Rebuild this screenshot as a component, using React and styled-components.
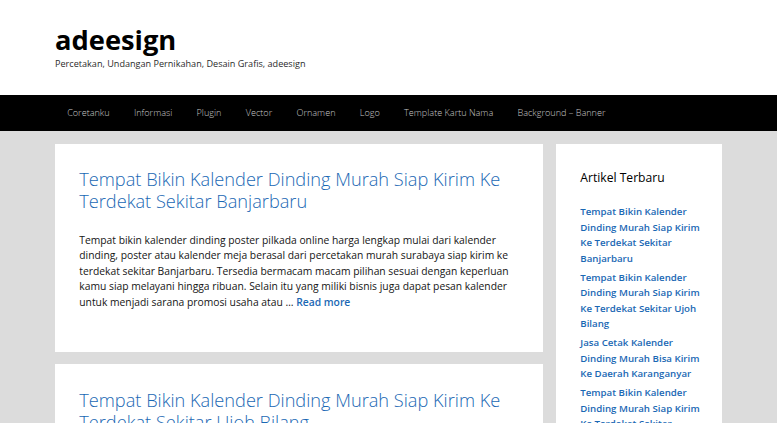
import React from "react";
import styled, { createGlobalStyle } from "styled-components";

const s = (v) => `${(v * 0.607).toFixed(2)}px`;

const Global = createGlobalStyle`
  html, body { margin: 0; padding: 0; }
  body { background: #dcdcdc; font-family: "Open Sans", "Noto Sans", sans-serif; color: #3a3a3a; }
  a { text-decoration: none; }
`;

const Header = styled.header`
  background: #fff;
  height: 95px;
  box-sizing: border-box;
  padding: ${s(40)} 0 0 55px;
`;

const SiteTitle = styled.div`
  font-size: ${s(45)};
  font-weight: 700;
  color: #000;
  line-height: 1.2;
`;

const Tagline = styled.div`
  font-size: ${s(15)};
  color: #2a2a2a;
  line-height: 1.5;
`;

const Nav = styled.nav`
  background: #000;
  height: 36px;
  display: flex;
  align-items: center;
  padding-left: 55px;
`;

const NavItem = styled.a`
  color: #c8c8c8;
  font-size: ${s(15)};
  font-weight: 300;
  padding: 0 ${s(20)};
  line-height: 36px;
`;

const Container = styled.div`
  display: flex;
  gap: 13px;
  padding: 13px 55px 0 55px;
  align-items: flex-start;
`;

const Main = styled.main`
  width: 488px;
  display: flex;
  flex-direction: column;
  gap: 12px;
`;

const Card = styled.article`
  background: #fff;
  padding: ${s(40)} ${s(40)} ${s(44)};
`;

const PostTitle = styled.h2`
  margin: 1px 0 0;
  font-size: ${s(30)};
  font-weight: 300;
  line-height: 1.2;
  color: #1a68b4;
`;

const Excerpt = styled.p`
  margin: ${s(33)} 0 ${s(25.5)};
  font-size: ${s(17)};
  line-height: 1.5;
  color: #151515;
`;

const More = styled.a`
  color: #1a68b4;
  font-weight: 600;
`;

const Sidebar = styled.aside`
  width: 166px;
  box-sizing: border-box;
  background: #fff;
  padding: ${s(40)} 20px 0 ${s(40)};
  height: 279px;
  overflow: hidden;
`;

const WidgetTitle = styled.h3`
  margin: 1px 0 ${s(28)};
  font-size: ${s(20)};
  font-weight: 400;
  line-height: 1.5;
  color: #000;
`;

const List = styled.ul`
  list-style: none;
  margin: 0;
  padding: 0;
`;

const Item = styled.li`
  font-size: 9.7px;
  line-height: 15.5px;
  margin-bottom: 3.5px;
  font-weight: 600;
  a { color: #1a68b4; }
`;

const nav = ["Coretanku", "Informasi", "Plugin", "Vector", "Ornamen", "Logo", "Template Kartu Nama", "Background – Banner"];

const recent = [
  "Tempat Bikin Kalender Dinding Murah Siap Kirim Ke Terdekat Sekitar Banjarbaru",
  "Tempat Bikin Kalender Dinding Murah Siap Kirim Ke Terdekat Sekitar Ujoh Bilang",
  "Jasa Cetak Kalender Dinding Murah Bisa Kirim Ke Daerah Karanganyar",
  "Tempat Bikin Kalender Dinding Murah Siap Kirim Ke Terdekat Sekitar Tanah Grogot",
];

export default function App() {
  return (
    <>
      <Global />
      <Header>
        <SiteTitle>adeesign</SiteTitle>
        <Tagline>Percetakan, Undangan Pernikahan, Desain Grafis, adeesign</Tagline>
      </Header>
      <Nav>
        {nav.map((n) => (
          <NavItem key={n}>{n}</NavItem>
        ))}
      </Nav>
      <Container>
        <Main>
          <Card>
            <PostTitle>Tempat Bikin Kalender Dinding Murah Siap Kirim Ke Terdekat Sekitar Banjarbaru</PostTitle>
            <Excerpt>
              Tempat bikin kalender dinding poster pilkada online harga lengkap mulai dari kalender dinding, poster atau kalender meja berasal dari percetakan murah surabaya siap kirim ke terdekat sekitar Banjarbaru. Tersedia bermacam macam pilihan sesuai dengan keperluan kamu siap melayani hingga ribuan. Selain itu yang miliki bisnis juga dapat pesan kalender untuk menjadi sarana promosi usaha atau … <More>Read more</More>
            </Excerpt>
          </Card>
          <Card>
            <PostTitle>Tempat Bikin Kalender Dinding Murah Siap Kirim Ke Terdekat Sekitar Ujoh Bilang</PostTitle>
            <Excerpt>
              Tempat bikin kalender dinding poster pilkada online harga lengkap mulai dari kalender dinding, poster atau kalender meja berasal dari percetakan murah surabaya siap kirim ke terdekat sekitar Ujoh Bilang.
            </Excerpt>
          </Card>
        </Main>
        <Sidebar>
          <WidgetTitle>Artikel Terbaru</WidgetTitle>
          <List>
            {recent.map((r, i) => (
              <Item key={i}><a>{r}</a></Item>
            ))}
          </List>
        </Sidebar>
      </Container>
    </>
  );
}
